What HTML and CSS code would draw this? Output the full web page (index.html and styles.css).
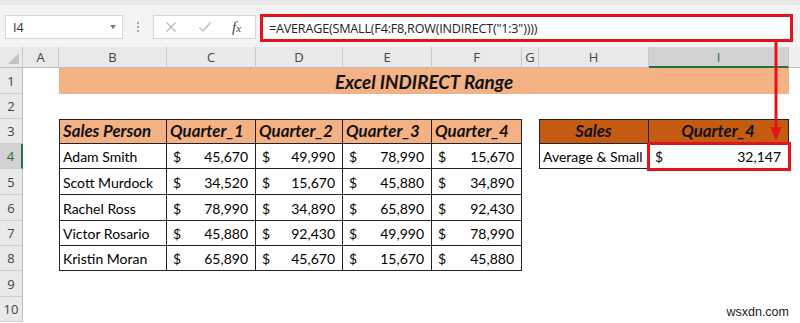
FILE: index.html
```html
<!DOCTYPE html>
<html>
<head>
<meta charset="utf-8">
<link rel="stylesheet" href="styles.css">
</head>
<body>
<div class="app">
  <div class="topstrip"></div>
  <div class="fbar">
    <div class="namebox"><span>I4</span><span class="dd"></span></div>
    <div class="dots"><i></i><i></i><i></i></div>
    <div class="fxbox">
      <svg class="ic" width="12" height="12" viewBox="0 0 12 12"><path d="M1.5 1.5 L10.5 10.5 M10.5 1.5 L1.5 10.5" stroke="#bdbdbd" stroke-width="1.4" fill="none"/></svg>
      <svg class="ic" width="14" height="12" viewBox="0 0 14 12"><path d="M1.5 6.5 L5 10 L12.5 1.5" stroke="#bdbdbd" stroke-width="1.4" fill="none"/></svg>
      <span class="fx"><i>f</i><i class="x">x</i></span>
    </div>
    <div class="formula">=AVERAGE(SMALL(F4:F8,ROW(INDIRECT("1:3"))))</div>
  </div>
  <div class="sheet">
    <div class="corner"><span class="tri"></span></div>
    <div class="ch">A</div><div class="ch">B</div><div class="ch">C</div><div class="ch">D</div><div class="ch">E</div><div class="ch">F</div><div class="ch">G</div><div class="ch">H</div><div class="ch sel">I</div><div class="ch last"></div>

    <div class="rh">1</div>
    <div class="c"></div>
    <div class="title">Excel INDIRECT Range</div>
    <div class="c"></div>

    <div class="rh">2</div>
    <div class="c"></div><div class="c"></div><div class="c"></div><div class="c"></div><div class="c"></div><div class="c"></div><div class="c"></div><div class="c"></div><div class="c"></div><div class="c"></div>

    <div class="rh">3</div>
    <div class="c"></div>
    <div class="c th t tl tt">Sales Person</div>
    <div class="c th t tt">Quarter_1</div>
    <div class="c th t tt">Quarter_2</div>
    <div class="c th t tt">Quarter_3</div>
    <div class="c th t tt">Quarter_4</div>
    <div class="c"></div>
    <div class="c th dark t tl tt ctr">Sales</div>
    <div class="c th dark t tt ctr">Quarter_4</div>
    <div class="c"></div>

    <div class="rh rsel">4</div>
    <div class="c"></div>
    <div class="c t tl">Adam Smith</div>
    <div class="c t m"><span>$</span><span>45,670</span></div>
    <div class="c t m"><span>$</span><span>49,990</span></div>
    <div class="c t m"><span>$</span><span>78,990</span></div>
    <div class="c t m"><span>$</span><span>15,670</span></div>
    <div class="c"></div>
    <div class="c t tl">Average &amp; Small</div>
    <div class="c t m hl"><span>$</span><span>32,147</span></div>
    <div class="c"></div>

    <div class="rh">5</div>
    <div class="c"></div>
    <div class="c t tl">Scott Murdock</div>
    <div class="c t m"><span>$</span><span>34,520</span></div>
    <div class="c t m"><span>$</span><span>15,670</span></div>
    <div class="c t m"><span>$</span><span>45,880</span></div>
    <div class="c t m"><span>$</span><span>34,890</span></div>
    <div class="c"></div><div class="c"></div><div class="c"></div><div class="c"></div>

    <div class="rh">6</div>
    <div class="c"></div>
    <div class="c t tl">Rachel Ross</div>
    <div class="c t m"><span>$</span><span>78,990</span></div>
    <div class="c t m"><span>$</span><span>34,890</span></div>
    <div class="c t m"><span>$</span><span>65,890</span></div>
    <div class="c t m"><span>$</span><span>92,430</span></div>
    <div class="c"></div><div class="c"></div><div class="c"></div><div class="c"></div>

    <div class="rh">7</div>
    <div class="c"></div>
    <div class="c t tl">Victor Rosario</div>
    <div class="c t m"><span>$</span><span>45,880</span></div>
    <div class="c t m"><span>$</span><span>92,430</span></div>
    <div class="c t m"><span>$</span><span>49,990</span></div>
    <div class="c t m"><span>$</span><span>78,990</span></div>
    <div class="c"></div><div class="c"></div><div class="c"></div><div class="c"></div>

    <div class="rh">8</div>
    <div class="c"></div>
    <div class="c t tl">Kristin Moran</div>
    <div class="c t m"><span>$</span><span>65,890</span></div>
    <div class="c t m"><span>$</span><span>45,670</span></div>
    <div class="c t m"><span>$</span><span>15,670</span></div>
    <div class="c t m"><span>$</span><span>45,880</span></div>
    <div class="c"></div><div class="c"></div><div class="c"></div><div class="c"></div>

    <div class="rh">9</div>
    <div class="c"></div><div class="c"></div><div class="c"></div><div class="c"></div><div class="c"></div><div class="c"></div><div class="c"></div><div class="c"></div><div class="c"></div><div class="c"></div>

    <div class="rh">10</div>
    <div class="c"></div><div class="c"></div><div class="c"></div><div class="c"></div><div class="c"></div><div class="c"></div><div class="c"></div><div class="c"></div><div class="c"></div><div class="c"></div>
  </div>
  <svg class="arrow" width="800" height="323" viewBox="0 0 800 323">
    <path d="M776 42 V130" stroke="#e3131b" stroke-width="3" fill="none"/>
    <path d="M770.5 127 L781.5 127 L776 141 Z" fill="#e3131b"/>
  </svg>
  <div class="watermark">wsxdn.com</div>
</div>
</body>
</html>
```

FILE: styles.css
```css
* { box-sizing: border-box; }
html, body { margin: 0; padding: 0; background: #fff; }
.app {
  position: relative;
  width: 800px;
  height: 323px;
  overflow: hidden;
  font-family: Lato, "Noto Sans", sans-serif;
  color: #000;
}
.topstrip { height: 5px; background: #e9e9e9; }
.fbar {
  height: 42px;
  background: #f3f3f3;
  display: flex;
  align-items: flex-start;
  padding: 9px 0 0 5px;
}
.namebox {
  margin-top: 1px;
  width: 118px;
  height: 24px;
  background: #fff;
  border: 1px solid #d6d6d6;
  display: flex;
  align-items: center;
  justify-content: space-between;
  padding: 0 6px 0 7px;
  font-family: "Open Sans", sans-serif;
  font-size: 12.5px;
  color: #333;
}
.dd {
  width: 0; height: 0;
  border-left: 3.5px solid transparent;
  border-right: 3.5px solid transparent;
  border-top: 4px solid #777;
}
.dots {
  width: 30px;
  height: 26px;
  display: flex;
  flex-direction: column;
  align-items: center;
  justify-content: center;
  gap: 2px;
}
.dots i { width: 2px; height: 2px; background: #a8a8a8; display: block; }
.fxbox {
  margin-top: 1px;
  width: 103px;
  height: 24px;
  background: #fff;
  border: 1px solid #d6d6d6;
  display: flex;
  align-items: center;
  padding-left: 11px;
}
.fxbox .ic:first-child { margin-right: 21px; }
.fxbox .ic:nth-child(2) { margin-right: 20px; }
.fx { font-family: "Liberation Serif", serif; font-size: 15px; color: #444; }
.fx .x { font-size: 11px; }
.formula {
  margin-left: 4px;
  width: 533px;
  height: 28px;
  background: #fff;
  border: 3px solid #e3131b;
  display: flex;
  align-items: center;
  padding-left: 6px;
  font-family: "Open Sans", sans-serif;
  font-size: 12.6px;
  letter-spacing: -0.2px;
  color: #222;
}
.sheet {
  display: grid;
  grid-template-columns: 23px 36px 108px 89px 87px 89px 90px 17px 110px 140px 1fr;
  grid-template-rows: 21px 26px 25px 25px 25px 26px 26px 25px 25px 26px 25px;
}
.corner {
  background: #e9e9e9;
  border-right: 1px solid #c9c9c9;
  border-bottom: 1px solid #bdbdbd;
  position: relative;
}
.tri {
  position: absolute;
  right: 3px; bottom: 3px;
  width: 0; height: 0;
  border-left: 11px solid transparent;
  border-bottom: 11px solid #c4c4c4;
}
.ch {
  background: #e9e9e9;
  border-right: 1px solid #c9c9c9;
  border-bottom: 1px solid #bdbdbd;
  display: flex;
  align-items: center;
  justify-content: center;
  font-family: "Open Sans", sans-serif;
  font-size: 13px;
  color: #444;
}
.ch.sel { background: #d2d2d2; border-bottom: 2px solid #217346; color: #217346; }
.ch.last { background: #f0f0f0; border-right: 0; }
.rh {
  background: #e9e9e9;
  border-right: 1px solid #bdbdbd;
  border-bottom: 1px solid #cfcfcf;
  display: flex;
  align-items: center;
  justify-content: center;
  font-family: "Open Sans", sans-serif;
  font-size: 13px;
  color: #444;
}
.rh.rsel { background: #d2d2d2; border-right: 2px solid #217346; color: #217346; }
.c {
  display: flex;
  align-items: flex-end;
  padding: 0 4px 3px 3px;
  font-size: 14px;
  white-space: nowrap;
  min-width: 0;
}
.title {
  grid-column: span 8;
  background: #f4b183;
  display: flex;
  align-items: center;
  justify-content: center;
  font-weight: 700;
  font-style: italic;
  font-size: 18.8px;
  color: #111;
}
.t { border-right: 1px solid #222; border-bottom: 1px solid #222; }
.tl { border-left: 1px solid #222; }
.tt { border-top: 1px solid #222; }
.th {
  background: #f4b183;
  font-weight: 700;
  font-style: italic;
  font-size: 16.8px;
  padding-bottom: 2px;
  color: #111;
}
.th.dark { background: #c55a11; }
.ctr { justify-content: center; }
.m { justify-content: space-between; padding-left: 6px; padding-right: 7px; }
.hl { outline: 3px solid #e3131b; outline-offset: -1px; position: relative; }
.arrow { position: absolute; left: 0; top: 0; pointer-events: none; }
.watermark {
  position: absolute;
  right: 11px;
  bottom: 4px;
  font-family: "Liberation Sans", Arial, sans-serif;
  font-size: 12.5px;
  color: #222;
}
```
